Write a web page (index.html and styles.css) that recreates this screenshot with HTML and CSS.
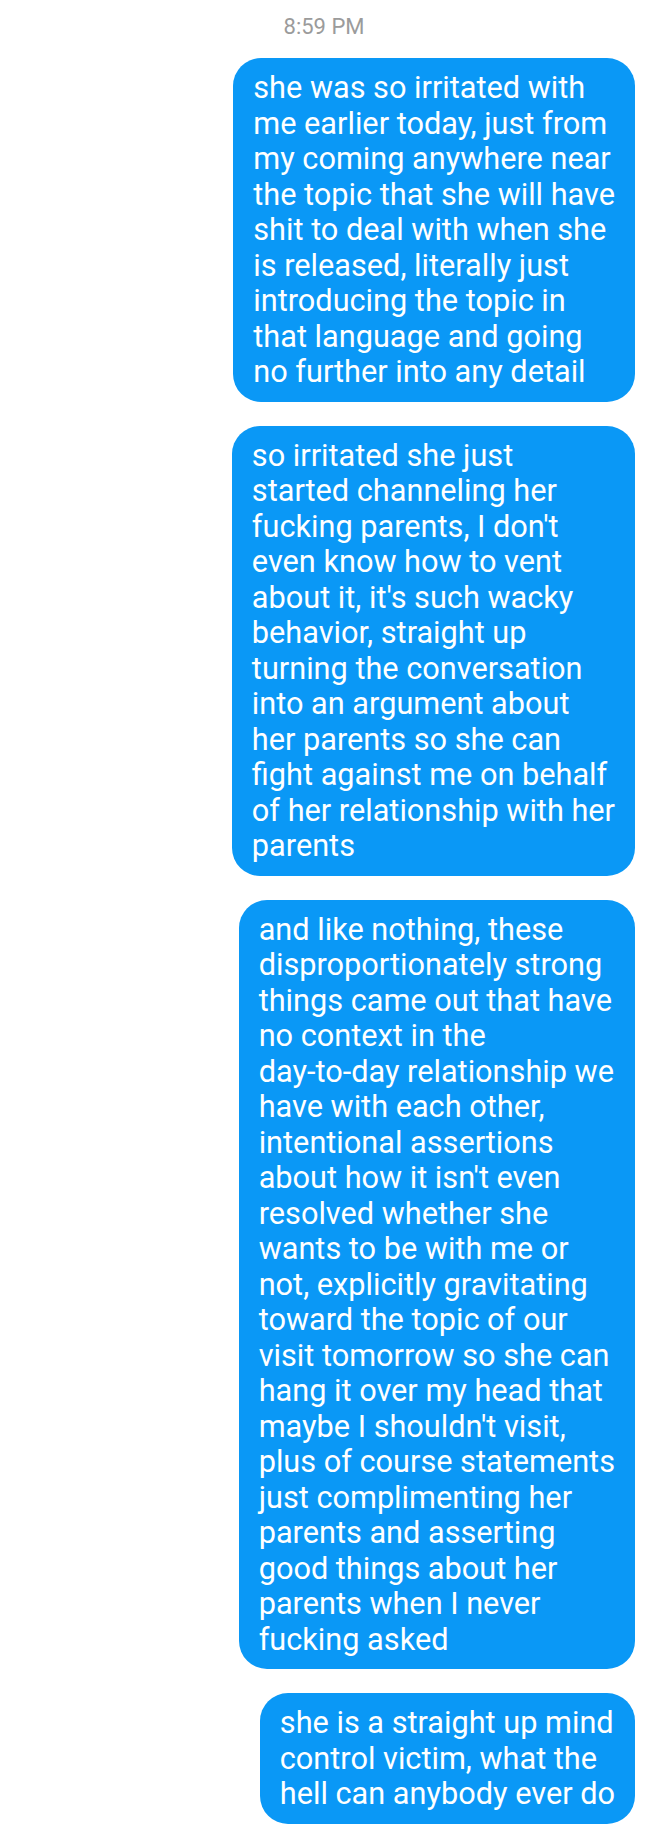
FILE: index.html
```html
<!DOCTYPE html>
<html lang="en">
<head>
<meta charset="utf-8">
<title>Messages</title>
<link rel="stylesheet" href="styles.css">
</head>
<body>
<div class="thread">
  <div class="timestamp">8:59 PM</div>
  <div class="messages">
    <div class="bubble">she was so irritated with<br>me earlier today, just from<br>my coming anywhere near<br>the topic that she will have<br>shit to deal with when she<br>is released, literally just<br>introducing the topic in<br>that language and going<br>no further into any detail</div>
    <div class="bubble">so irritated she just<br>started channeling her<br>fucking parents, I don't<br>even know how to vent<br>about it, it's such wacky<br>behavior, straight up<br>turning the conversation<br>into an argument about<br>her parents so she can<br>fight against me on behalf<br>of her relationship with her<br>parents</div>
    <div class="bubble">and like nothing, these<br>disproportionately strong<br>things came out that have<br>no context in the<br>day-to-day relationship we<br>have with each other,<br>intentional assertions<br>about how it isn't even<br>resolved whether she<br>wants to be with me or<br>not, explicitly gravitating<br>toward the topic of our<br>visit tomorrow so she can<br>hang it over my head that<br>maybe I shouldn't visit,<br>plus of course statements<br>just complimenting her<br>parents and asserting<br>good things about her<br>parents when I never<br>fucking asked</div>
    <div class="bubble">she is a straight up mind<br>control victim, what the<br>hell can anybody ever do</div>
  </div>
</div>
</body>
</html>
```
FILE: styles.css
```css
html, body {
  margin: 0;
  padding: 0;
  background: #ffffff;
}

.thread {
  font-family: Roboto, "Noto Sans", "Liberation Sans", sans-serif;
  display: flex;
  flex-direction: column;
}

.timestamp {
  text-align: center;
  color: #9b9b9b;
  font-size: 22px;
  line-height: 26px;
  padding-top: 14px;
  margin-bottom: 18px;
}

.messages {
  display: flex;
  flex-direction: column;
  align-items: flex-end;
  gap: 24px;
  padding-right: 13px;
}

.bubble {
  width: max-content;
  background: #0a98f6;
  color: #ffffff;
  font-size: 30.7px;
  line-height: 35.5px;
  padding: 12px 20px;
  border-radius: 28px;
}
```
